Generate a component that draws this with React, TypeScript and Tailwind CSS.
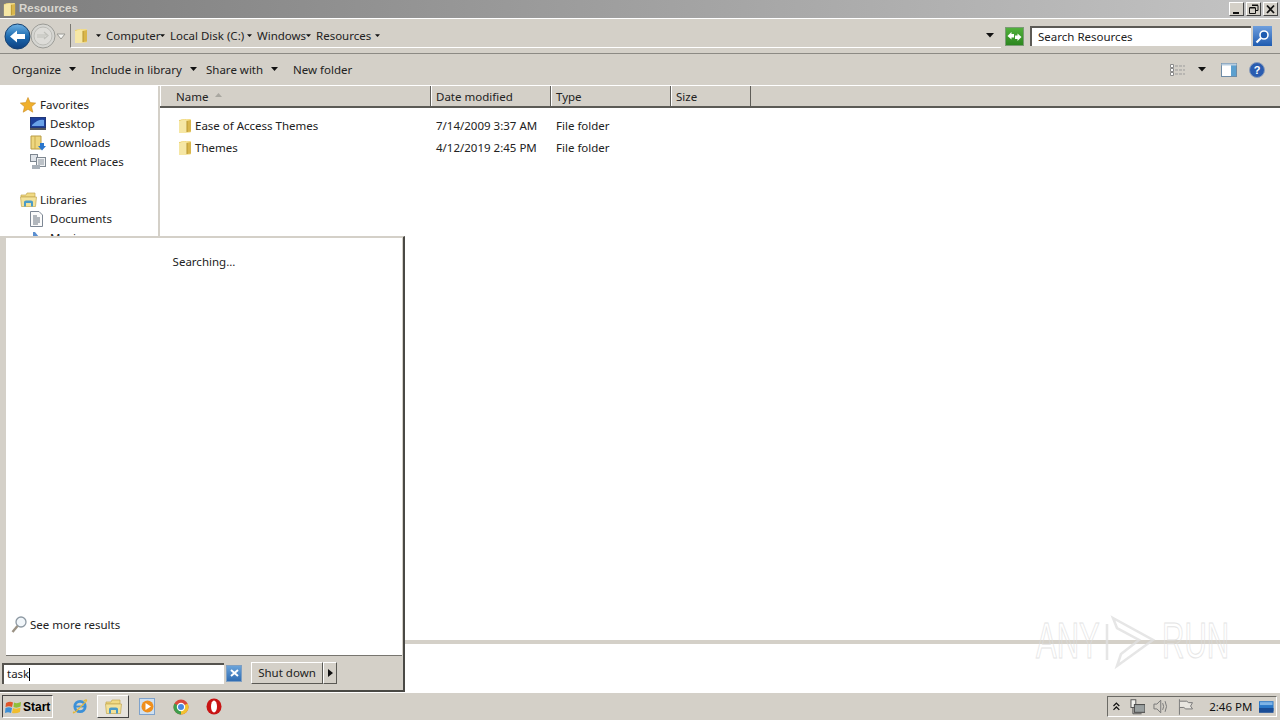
import React from "react";

const Folder = ({ s = 14 }: { s?: number }) => (
  <svg width={s} height={s + 2} viewBox="0 0 14 16" className="shrink-0">
    <path d="M1 2 L8 1 L8 14 L1 15 Z" fill="#e9cf6c" />
    <path d="M3 1.5 L12 1 Q13 1 13 2 L13 13.5 Q13 14.5 12 14.5 L4 15 Z" fill="#f3dc85" />
    <path d="M1 3 L7 1.5 L9 3 L9 14 L7 15 L1 15 Z" fill="#f6e7a5" />
    <path d="M9 3 L9 14 L13 13.5 L13 2 Z" fill="#d9b64c" />
    <path d="M9 3 L9 14" stroke="#b8952f" strokeWidth="1" />
  </svg>
);

const Caret = ({ w = 8, c = "#111" }: { w?: number; c?: string }) => (
  <svg width={w} height={w / 2 + 1} viewBox="0 0 8 5" className="shrink-0">
    <path d="M0 0 H8 L4 4.5 Z" fill={c} />
  </svg>
);

const Crumb = ({ t, w }: { t: string; w: string }) => (
  <div className={`flex items-center gap-[4px] ${w}`}>
    <Caret w={5} />
    <span className="ml-[1px]">{t}</span>
  </div>
);

const Tool = ({ t, w, caret }: { t: string; w: string; caret?: boolean }) => (
  <div className={`flex items-center ${w}`}>
    <span>{t}</span>
    {caret && (
      <span className="ml-[8px]">
        <Caret w={7} />
      </span>
    )}
  </div>
);

const Column = ({ t, w, arrow }: { t: string; w: string; arrow?: boolean }) => (
  <div className={`flex h-full items-center pl-[4px] pt-[1px] border-r border-r-[#5f5d58] border-l border-l-white ${w}`}>
    <span>{t}</span>
    {arrow && (
      <svg width="7" height="4" viewBox="0 0 7 4" className="ml-[7px] mb-[3px]">
        <path d="M0 4 L3.5 0 L7 4 Z" fill="#a9a7a0" />
      </svg>
    )}
  </div>
);

const FileRow = ({ name, date }: { name: string; date: string }) => (
  <div className="flex h-[22px] items-center">
    <div className="flex w-[271px] items-center gap-[3px] pl-[18px]">
      <Folder />
      <span>{name}</span>
    </div>
    <div className="w-[120px] pl-[5px]">{date}</div>
    <div className="pl-[5px]">File folder</div>
  </div>
);

const DesktopIcon = () => (
  <svg width="16" height="13" viewBox="0 0 16 13" className="shrink-0">
    <rect x="0" y="0" width="16" height="11" fill="#1d3f9a" stroke="#27325c" />
    <path d="M2 8 Q8 2 14 3 V9 H2 Z" fill="#6aa2e8" />
    <rect x="0" y="11" width="16" height="2" fill="#52555c" />
  </svg>
);
const DownloadsIcon = () => (
  <svg width="16" height="16" viewBox="0 0 16 16" className="shrink-0">
    <path d="M1 1 H11 V14 H1 Z" fill="#eed77f" stroke="#b99c45" />
    <path d="M5 1 V14" stroke="#c9aa4e" />
    <path d="M10 8 H14 V11 H16 L12 15.5 L8 11 H10 Z" fill="#2b76cd" />
  </svg>
);
const RecentIcon = () => (
  <svg width="16" height="16" viewBox="0 0 16 16" className="shrink-0">
    <rect x="0.5" y="0.5" width="7" height="7" fill="#dfe3e8" stroke="#7e8790" />
    <rect x="6.5" y="3.5" width="9" height="9" fill="#eef0f2" stroke="#7e8790" />
    <path d="M8 6 H14 M8 8 H14 M8 10 H14" stroke="#8a939c" />
    <rect x="2" y="11" width="8" height="4" fill="#a8b0b8" />
  </svg>
);
const LibraryIcon = () => (
  <svg width="17" height="15" viewBox="0 0 17 15" className="shrink-0">
    <path d="M1 3 H6 L7 1 H15 V5 H1 Z" fill="#f0da84" stroke="#c3a750" strokeWidth="0.7" />
    <path d="M0.5 5 H16.5 L15.5 14.5 H1.5 Z" fill="#f3e29a" stroke="#c3a750" strokeWidth="0.7" />
    <path d="M4 14.5 V10 Q4 8.5 6 8.5 H11 Q13 8.5 13 10 V14.5 H11 V11 H6 V14.5 Z" fill="#4a9bc9" />
  </svg>
);
const DocumentIcon = () => (
  <svg width="13" height="16" viewBox="0 0 13 16" className="shrink-0">
    <path d="M0.5 0.5 H9 L12.5 4 V15.5 H0.5 Z" fill="#fbfbfb" stroke="#7d8794" />
    <path d="M3 5 H7 M3 7 H10 M3 9 H10 M3 11 H10 M3 13 H8" stroke="#68727e" />
  </svg>
);

const NavRow = ({ icon, t, child, clip }: { icon: React.ReactNode; t: string; child?: boolean; clip?: boolean }) => (
  <div className={`flex h-[19px] items-center ${child ? "pl-[30px]" : "pl-[20px]"}`}>
    <div className="flex w-[20px] shrink-0 items-center">{icon}</div>
    <span className={clip ? "opacity-90" : ""}>{t}</span>
  </div>
);

export default function App() {
  return (
    <div className="relative flex h-[720px] w-[1280px] flex-col overflow-hidden bg-white font-['Noto_Sans','Open_Sans',sans-serif] text-[11.5px] leading-none text-[#222]">
      {/* Title bar */}
      <div className="flex h-[18px] shrink-0 items-center bg-gradient-to-r from-[#7e7e7e] to-[#c4c4c4] pl-[3px] pr-[2px]">
        <Folder s={13} />
        <span className="ml-[3px] font-['Liberation_Sans',sans-serif] text-[11.5px] font-bold text-[#d8d6cf]">Resources</span>
        <div className="ml-auto flex gap-[2px]">
          {[
            <path key="a" d="M3 9 H9 V11 H3 Z" fill="#111" />,
            <path key="b" d="M5 2.5 H11 V7.5 H9 M2.5 5 H8.5 V10.5 H2.5 Z M5 2 H11 M2.5 4.5 H8.5" fill="none" stroke="#111" />,
            <path key="c" d="M3 2.5 L10 10 M10 2.5 L3 10" fill="none" stroke="#111" strokeWidth="1.8" />,
          ].map((p, i) => (
            <div key={i} className="flex h-[14px] w-[15px] items-center justify-center border border-t-white border-l-white border-r-[#444] border-b-[#444] bg-[#d4d0c8]">
              <svg width="13" height="12" viewBox="0 0 13 12">{p}</svg>
            </div>
          ))}
        </div>
      </div>

      {/* Address row */}
      <div className="flex h-[36px] shrink-0 items-center border-y border-y-[#8c8a84] border-t-white bg-[#d4d0c8] pl-[4px] pr-[3px]">
        <svg width="27" height="27" viewBox="0 0 27 27" className="shrink-0">
          <defs>
            <linearGradient id="bk" x1="0" y1="0" x2="0" y2="1">
              <stop offset="0" stopColor="#6fb2e4" />
              <stop offset="0.5" stopColor="#1d6bb0" />
              <stop offset="1" stopColor="#0d3f80" />
            </linearGradient>
          </defs>
          <circle cx="13.5" cy="13.5" r="12.5" fill="url(#bk)" stroke="#16406f" />
          <path d="M6 13.5 L13 7.5 V11 H21 V16 H13 V19.5 Z" fill="#fff" />
        </svg>
        <svg width="26" height="26" viewBox="0 0 26 26" className="-ml-[1px] shrink-0">
          <circle cx="13" cy="13" r="12" fill="#d6d6d2" stroke="#9b9b96" />
          <circle cx="13" cy="13" r="9" fill="#dddcd8" stroke="#bcbcb7" />
          <path d="M7 12 H17 M14 9 L18 12.5 L14 16 M7 14 H15" fill="none" stroke="#bfbfba" strokeWidth="1.2" />
        </svg>
        <svg width="10" height="7" viewBox="0 0 10 7" className="ml-[0px] shrink-0">
          <path d="M1 1 H9 L5 6 Z" fill="#f5f5f2" stroke="#9a9a94" />
        </svg>
        <div className="ml-[4px] flex h-[24px] w-[931px] shrink-0 items-center border-l border-l-[#7a7872] border-b border-b-white pl-[3px] pr-[7px]">
          <Folder s={14} />
          <div className="ml-[8px] flex items-center">
            <Crumb t="Computer" w="w-[64px]" />
            <Crumb t="Local Disk (C:)" w="w-[87px]" />
            <Crumb t="Windows" w="w-[59px]" />
            <Crumb t="Resources" w="w-[69px]" />
            <Caret w={5} />
          </div>
          <div className="ml-auto">
            <Caret w={8} />
          </div>
        </div>
        <div className="ml-[4px] flex h-[19px] w-[19px] shrink-0 items-center justify-center border border-[#7b9b76] bg-gradient-to-b from-[#52b13c] to-[#2c861f]">
          <svg width="15" height="11" viewBox="0 0 15 11">
            <path d="M0.5 5 L4.5 1 V3 H7 V6.5 H4.5 V8.5 Z" fill="#fff" />
            <path d="M14.5 6 L10.5 10 V8 H8 V4.5 H10.5 V2.5 Z" fill="#fff" />
          </svg>
        </div>
        <div className="ml-[6px] flex h-[20px] w-[221px] shrink-0 items-center border-l-2 border-t-2 border-l-[#5c5a55] border-t-[#5c5a55] bg-white pl-[6px]">Search Resources</div>
        <div className="ml-[2px] flex h-[20px] w-[19px] shrink-0 items-center justify-center bg-gradient-to-b from-[#6f9fdd] to-[#1e5bb0]">
          <svg width="15" height="15" viewBox="0 0 15 15">
            <circle cx="9" cy="6" r="4" fill="#1e5bb0" stroke="#fff" strokeWidth="1.6" />
            <path d="M6 9 L1.5 13.5" stroke="#fff" strokeWidth="2.2" />
          </svg>
        </div>
      </div>

      {/* Toolbar */}
      <div className="flex h-[31px] shrink-0 items-center bg-[#d4d0c8] pl-[12px] pr-[15px]">
        <Tool t="Organize" w="w-[79px]" caret />
        <Tool t="Include in library" w="w-[115px]" caret />
        <Tool t="Share with" w="w-[87px]" caret />
        <Tool t="New folder" w="w-[80px]" />
        <div className="ml-auto flex items-center">
          <svg width="15" height="13" viewBox="0 0 15 13">
            <path d="M0.5 1.5 H3.5 V4.5 H0.5 Z M0.5 5.5 H3.5 V8.5 H0.5 Z M0.5 9.5 H3.5 V12.5 H0.5 Z" fill="#fff" stroke="#8a8a8a" />
            <path d="M5 3 H15 M5 7 H15 M5 11 H15" stroke="#9b9b9b" strokeDasharray="3 1" />
          </svg>
          <span className="ml-[13px]">
            <Caret w={8} />
          </span>
          <svg width="16" height="14" viewBox="0 0 16 14" className="ml-[15px]">
            <rect x="0.5" y="0.5" width="15" height="13" fill="#fff" stroke="#6d8ba6" />
            <rect x="10" y="1" width="5" height="12" fill="#5ca0cf" />
            <rect x="0.5" y="0.5" width="15" height="2" fill="#b7cde0" />
          </svg>
          <svg width="16" height="16" viewBox="0 0 16 16" className="ml-[12px]">
            <circle cx="8" cy="8" r="7.5" fill="#2a5cb0" stroke="#8b9dbb" />
            <text x="8" y="12" textAnchor="middle" fontSize="11" fontWeight="700" fill="#fff" fontFamily="Liberation Sans">?</text>
          </svg>
        </div>
      </div>

      {/* Main */}
      <div className="flex h-[555px] shrink-0 border-t border-t-white">
        <div className="w-[158px] shrink-0 overflow-hidden pt-[9px]">
          <NavRow
            t="Favorites"
            icon={
              <svg width="16" height="16" viewBox="0 0 16 16">
                <path d="M8 0.5 L10.2 5.6 L15.7 6.1 L11.5 9.7 L12.8 15.2 L8 12.3 L3.2 15.2 L4.5 9.7 L0.3 6.1 L5.8 5.6 Z" fill="#f0b02c" stroke="#c98a20" strokeWidth="0.6" />
              </svg>
            }
          />
          <NavRow child t="Desktop" icon={<DesktopIcon />} />
          <NavRow child t="Downloads" icon={<DownloadsIcon />} />
          <NavRow child t="Recent Places" icon={<RecentIcon />} />
          <div className="h-[19px]" />
          <NavRow t="Libraries" icon={<LibraryIcon />} />
          <NavRow child t="Documents" icon={<DocumentIcon />} />
          <NavRow child t="Music" icon={<svg width="12" height="14" viewBox="0 0 12 14"><path d="M5 1 L9 6 L6 6 L6 13 L3 13 L3 1 Z" fill="#5b8fd0" /></svg>} />
        </div>
        <div className="w-[2px] shrink-0 bg-[#d4d0c8]" />
        <div className="min-w-0 flex-1">
          <div className="flex h-[22px] items-center border-b-2 border-b-[#5b5a55] bg-[#d4d0c8]">
            <Column t="Name" w="w-[271px] pl-[15px]" arrow />
            <Column t="Date modified" w="w-[120px]" />
            <Column t="Type" w="w-[120px]" />
            <Column t="Size" w="w-[80px]" />
          </div>
          <div className="pt-[7px]">
            <FileRow name="Ease of Access Themes" date="7/14/2009 3:37 AM" />
            <FileRow name="Themes" date="4/12/2019 2:45 PM" />
          </div>
        </div>
      </div>

      {/* Divider + details pane */}
      <div className="h-[4px] shrink-0 bg-[#d4d0c8]" />
      <div className="flex-1 bg-white" />

      {/* Taskbar */}
      <div className="flex h-[28px] shrink-0 items-center border-t border-t-white bg-[#d4d0c8] pl-[2px] pr-[3px]">
        <div className="flex h-[23px] w-[51px] shrink-0 items-center gap-[1px] border border-t-[#444] border-l-[#444] border-r-white border-b-white pl-[2px]">
          <svg width="17" height="16" viewBox="0 0 17 16">
            <path d="M1 4 Q5 2 8 3.5 L7 8 Q4 6.5 0.5 8 Z" fill="#e0552a" />
            <path d="M9 3.5 Q12 5 16 3 L15.5 7.5 Q12 9.5 8.5 8 Z" fill="#8fbf3a" />
            <path d="M0.5 9 Q4 7.5 7 9 L6 14 Q3 12.5 0 14 Z" fill="#3d8fd6" />
            <path d="M8 9 Q11.5 10.5 15.5 8.5 L15 13 Q11 15 7 14 Z" fill="#f0bd2e" />
          </svg>
          <span className="font-['Liberation_Sans',sans-serif] text-[12px] font-bold text-black">Start</span>
        </div>
        <div className="ml-[19px] flex w-[16px] shrink-0 justify-center">
          <svg width="17" height="17" viewBox="0 0 17 17">
            <circle cx="8.5" cy="8.5" r="5.5" fill="none" stroke="#3b90d8" strokeWidth="3" />
            <path d="M3 8.5 H14" stroke="#3b90d8" strokeWidth="2" />
            <path d="M2 14 Q0 17 5 13 L15 3 Q17 0 12 3" fill="none" stroke="#e6b83a" strokeWidth="1.2" />
          </svg>
        </div>
        <div className="ml-[9px] flex h-[23px] w-[32px] shrink-0 items-center justify-center border border-t-white border-l-white border-r-[#444] border-b-[#444] bg-[#e6e3dd]">
          <LibraryIcon />
        </div>
        <div className="ml-[10px] flex h-[17px] w-[16px] shrink-0 items-center justify-center border border-[#7ea2cc] bg-[#cfe0f0]">
          <svg width="13" height="13" viewBox="0 0 13 13">
            <circle cx="6.5" cy="6.5" r="6" fill="#ef8f1c" />
            <path d="M4.5 3 L10 6.5 L4.5 10 Z" fill="#fff" />
          </svg>
        </div>
        <svg width="16" height="16" viewBox="0 0 16 16" className="ml-[18px] shrink-0">
          <circle cx="8" cy="8" r="7.5" fill="#d9483b" />
          <path d="M8 8 L14.6 4.4 A7.5 7.5 0 0 1 8 15.5 Z" fill="#f2c230" />
          <path d="M8 8 L8 15.5 A7.5 7.5 0 0 1 1.4 4.4 Z" fill="#3f9e4d" />
          <circle cx="8" cy="8" r="3.6" fill="#4a88e0" stroke="#fff" strokeWidth="1.2" />
        </svg>
        <svg width="16" height="17" viewBox="0 0 16 17" className="ml-[17px] shrink-0">
          <ellipse cx="8" cy="8.5" rx="7.5" ry="8" fill="#c81414" />
          <ellipse cx="8" cy="8.5" rx="3" ry="6" fill="#fff" />
        </svg>
        <div className="ml-auto flex h-[21px] w-[170px] shrink-0 items-center border border-t-[#6b6a65] border-l-[#6b6a65] border-r-white border-b-white pl-[5px] pr-[2px]">
          <svg width="7" height="9" viewBox="0 0 7 9">
            <path d="M0.5 4 L3.5 1 L6.5 4 M0.5 8 L3.5 5 L6.5 8" fill="none" stroke="#111" strokeWidth="1.3" />
          </svg>
          <svg width="16" height="16" viewBox="0 0 16 16" className="ml-[10px]">
            <rect x="1" y="0.5" width="5" height="8" fill="#f2f2ee" stroke="#555" />
            <rect x="4.5" y="5.5" width="11" height="8" fill="#9aa0a0" stroke="#444" />
            <path d="M3 8 V15 H12" fill="none" stroke="#555" />
          </svg>
          <svg width="16" height="15" viewBox="0 0 16 15" className="ml-[8px]">
            <path d="M1 5 H4 L8 1 V14 L4 10 H1 Z" fill="#d4d0c8" stroke="#777" />
            <path d="M10 4 Q12 7.5 10 11 M12.5 2 Q15.5 7.5 12.5 13" fill="none" stroke="#777" />
          </svg>
          <svg width="16" height="16" viewBox="0 0 16 16" className="ml-[9px]">
            <path d="M1.5 0 V16" stroke="#777" />
            <path d="M2 2 H9 L11 3.5 H15 L13 7 L15 10 H8 L6 8.5 H2" fill="#e8e6e0" stroke="#777" />
          </svg>
          <span className="ml-[16px] w-[52px] whitespace-nowrap text-[#111]">2:46 PM</span>
          <svg width="15" height="12" viewBox="0 0 15 12">
            <rect width="15" height="10" fill="#2b78c8" />
            <rect y="7" width="15" height="5" fill="#1a4d96" />
            <rect x="1" y="1" width="13" height="3" fill="#7fb4e6" />
          </svg>
        </div>
      </div>

      {/* Start menu overlay */}
      <div className="absolute bottom-[28px] left-0 flex h-[456px] w-[405px] flex-col border-r-2 border-b-2 border-r-[#4a4945] border-b-[#4a4945] border-t border-t-[#d4d0c8] bg-[#d4d0c8] pl-[6px] pr-[1px] pt-[1px]">
        <div className="flex min-h-0 flex-1 flex-col border-b border-b-[#77756f] bg-white">
          <div className="pt-[18px] text-center">Searching...</div>
          <div className="mt-auto flex items-center pb-[21px] pl-[5px]">
            <svg width="16" height="18" viewBox="0 0 16 18">
              <circle cx="10" cy="6" r="5" fill="#f1f6fa" stroke="#8d99a3" strokeWidth="1.3" />
              <path d="M6.5 10 L1.5 16" stroke="#9b9284" strokeWidth="2.4" />
            </svg>
            <span className="ml-[3px]">See more results</span>
          </div>
        </div>
        <div className="flex h-[34px] shrink-0 items-center -ml-[4px]">
          <div className="flex h-[21px] w-[222px] items-center border-l-2 border-t-2 border-l-[#55534e] border-t-[#55534e] bg-white pl-[3px]">
            <span>task</span>
            <span className="h-[13px] w-px bg-black" />
          </div>
          <div className="ml-[2px] flex h-[17px] w-[16px] items-center justify-center border border-[#7f9fc2] bg-gradient-to-b from-[#6aa3da] to-[#2f6cb2]">
            <svg width="9" height="8" viewBox="0 0 9 8">
              <path d="M1 1 L8 7 M8 1 L1 7" stroke="#fff" strokeWidth="2" />
            </svg>
          </div>
          <div className="ml-[9px] flex h-[22px] w-[72px] items-center justify-center border border-t-white border-l-white border-r-[#5a5954] border-b-[#5a5954] bg-[#d4d0c8]">Shut down</div>
          <div className="flex h-[22px] w-[14px] items-center justify-center border border-t-white border-l-white border-r-[#5a5954] border-b-[#5a5954] bg-[#d4d0c8]">
            <svg width="5" height="8" viewBox="0 0 5 8">
              <path d="M0 0 L5 4 L0 8 Z" fill="#111" />
            </svg>
          </div>
        </div>
      </div>

      {/* Watermark */}
      <div className="pointer-events-none absolute left-[1036px] top-[610px] flex h-[62px] w-[200px] items-center opacity-80">
        <span className="w-[66px] origin-left scale-x-[0.62] font-['Liberation_Sans',sans-serif] text-[50px] text-transparent [-webkit-text-stroke:1px_#dedede]">ANY</span>
        <svg width="58" height="62" viewBox="0 0 58 62" className="-ml-[1px] shrink-0">
          <path d="M6 14 V50 M12 8 L52 30 L16 56 L20 44 L38 30 L16 18 Z" fill="none" stroke="#e0e0e0" strokeWidth="2.5" />
        </svg>
        <span className="ml-[3px] w-[68px] origin-left scale-x-[0.62] font-['Liberation_Sans',sans-serif] text-[50px] text-transparent [-webkit-text-stroke:1px_#dedede]">RUN</span>
      </div>
    </div>
  );
}
